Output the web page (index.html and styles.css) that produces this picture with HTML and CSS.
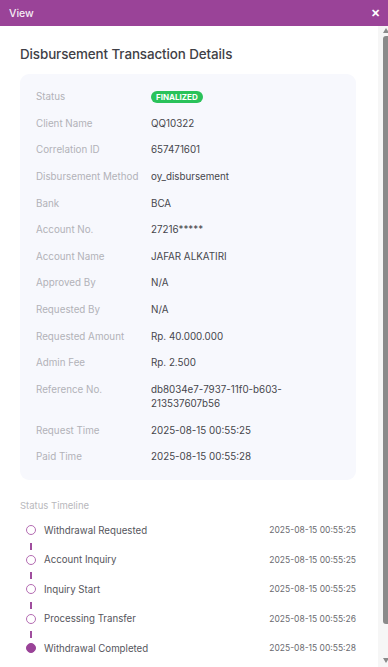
FILE: index.html
```html
<!DOCTYPE html>
<html lang="en">

<head>
    <meta charset="UTF-8">
    <meta name="viewport" content="width=device-width, initial-scale=1.0">
    <title>View</title>
    <link rel="stylesheet" href="styles.css">
</head>

<body>
    <div class="modal">
        <div class="modal-header">
            <span class="modal-title">View</span>
            <span class="modal-close">&#x2715;</span>
        </div>
        <div class="modal-body">
            <div class="content">
                <h2 class="detail-title">Disbursement Transaction Details</h2>

                <div class="detail-card">
                    <div class="row"><span class="label">Status</span><span class="value"><span class="badge">FINALIZED</span></span></div>
                    <div class="row"><span class="label">Client Name</span><span class="value">QQ10322</span></div>
                    <div class="row"><span class="label">Correlation ID</span><span class="value">657471601</span></div>
                    <div class="row"><span class="label">Disbursement Method</span><span class="value">oy_disbursement</span></div>
                    <div class="row"><span class="label">Bank</span><span class="value">BCA</span></div>
                    <div class="row"><span class="label">Account No.</span><span class="value">27216*****</span></div>
                    <div class="row"><span class="label">Account Name</span><span class="value">JAFAR ALKATIRI</span></div>
                    <div class="row"><span class="label">Approved By</span><span class="value">N/A</span></div>
                    <div class="row"><span class="label">Requested By</span><span class="value">N/A</span></div>
                    <div class="row"><span class="label">Requested Amount</span><span class="value">Rp. 40.000.000</span></div>
                    <div class="row"><span class="label">Admin Fee</span><span class="value">Rp. 2.500</span></div>
                    <div class="row"><span class="label">Reference No.</span><span class="value">db8034e7-7937-11f0-b603-<br>213537607b56</span></div>
                    <div class="row"><span class="label">Request Time</span><span class="value">2025-08-15 00:55:25</span></div>
                    <div class="row"><span class="label">Paid Time</span><span class="value">2025-08-15 00:55:28</span></div>
                </div>

                <div class="timeline-title">Status Timeline</div>
                <ul class="timeline">
                    <li class="step">
                        <span class="dot"></span>
                        <span class="step-name">Withdrawal Requested</span>
                        <span class="step-time">2025-08-15 00:55:25</span>
                    </li>
                    <li class="step">
                        <span class="dot"></span>
                        <span class="step-name">Account Inquiry</span>
                        <span class="step-time">2025-08-15 00:55:25</span>
                    </li>
                    <li class="step">
                        <span class="dot"></span>
                        <span class="step-name">Inquiry Start</span>
                        <span class="step-time">2025-08-15 00:55:25</span>
                    </li>
                    <li class="step">
                        <span class="dot"></span>
                        <span class="step-name">Processing Transfer</span>
                        <span class="step-time">2025-08-15 00:55:26</span>
                    </li>
                    <li class="step last">
                        <span class="dot done"></span>
                        <span class="step-name">Withdrawal Completed</span>
                        <span class="step-time">2025-08-15 00:55:28</span>
                    </li>
                </ul>
            </div>

            <!-- 右侧滚动条 -->
            <div class="scrollbar">
                <span class="arrow arrow-up"></span>
                <div class="track"><div class="thumb"></div></div>
                <span class="arrow arrow-down"></span>
            </div>
        </div>
    </div>
</body>

</html>
```

FILE: styles.css
```css
* {
    margin: 0;
    padding: 0;
    box-sizing: border-box;
}

body {
    font-family: Inter, "Open Sans", sans-serif;
    background-color: #ffffff;
    color: #444;
}

.modal {
    height: 667px;
    display: flex;
    flex-direction: column;
    overflow: hidden;
}

/* 顶部紫色标题栏 */
.modal-header {
    height: 26px;
    flex: none;
    background-color: #9a4398;
    color: #fff;
    display: flex;
    align-items: center;
    justify-content: space-between;
    padding: 0 8px 0 9px;
}

.modal-title {
    font-size: 10.5px;
    font-weight: 500;
    opacity: 0.9;
}

.modal-close {
    font-size: 11px;
    font-weight: 700;
}

.modal-body {
    flex: 1;
    display: flex;
    min-height: 0;
}

.content {
    flex: 1;
    overflow: hidden;
    padding: 18px 22px 0 20px;
}

/* 滚动条 */
.scrollbar {
    width: 10px;
    flex: none;
    background-color: #f6f6f6;
    display: flex;
    flex-direction: column;
    align-items: flex-end;
    padding: 2px 0 4px;
}

.arrow {
    width: 0;
    height: 0;
    border-left: 3px solid transparent;
    border-right: 3px solid transparent;
    margin-right: -1px;
}

.arrow-up {
    border-bottom: 5px solid #8a8a8a;
}

.arrow-down {
    border-top: 5px solid #8a8a8a;
}

.track {
    flex: 1;
    width: 100%;
    display: flex;
    justify-content: flex-end;
    padding: 3px 0 34px;
}

.thumb {
    width: 5px;
    height: 100%;
    background-color: #8a8a8a;
    border-radius: 3px 0 0 3px;
}

.detail-title {
    font-size: 13.4px;
    font-weight: 500;
    color: #3f3f46;
    line-height: 20px;
    letter-spacing: -0.1px;
}

/* 详情卡片 */
.detail-card {
    margin-top: 10px;
    background-color: #f7f8fd;
    border-radius: 9px;
    padding: 16px;
    display: flex;
    flex-direction: column;
    gap: 12.65px;
}

.row {
    display: flex;
    font-size: 9.8px;
    line-height: 14px;
}

.label {
    width: 115px;
    flex: none;
    color: #b2b2b8;
}

.value {
    color: #46464c;
}

.badge {
    display: inline-block;
    background-color: #2ac25a;
    color: #fff;
    font-size: 8px;
    font-weight: 700;
    line-height: 12px;
    padding: 0 5px;
    border-radius: 6px;
    vertical-align: top;
    margin-top: 1px;
}

/* 状态时间线 */
.timeline-title {
    margin-top: 19px;
    font-size: 9.5px;
    color: #b8b8bc;
    line-height: 14px;
}

.timeline {
    list-style: none;
    margin-top: 2px;
    padding-left: 6px;
}

.step {
    position: relative;
    display: flex;
    align-items: center;
    height: 29.5px;
}

.step:not(.last)::after {
    content: "";
    position: absolute;
    left: 4.3px;
    top: 27.5px;
    width: 1.5px;
    height: 7px;
    background-color: #a04e9e;
}

.dot {
    width: 10px;
    height: 10px;
    border: 1.5px solid #b46cb2;
    border-radius: 50%;
    flex: none;
}

.dot.done {
    background-color: #9a4398;
    border-color: #9a4398;
}

.step-name {
    margin-left: 8px;
    flex: 1;
    font-size: 9.7px;
    color: #55555c;
}

.step-time {
    font-size: 8.5px;
    color: #6b6b70;
}
```
